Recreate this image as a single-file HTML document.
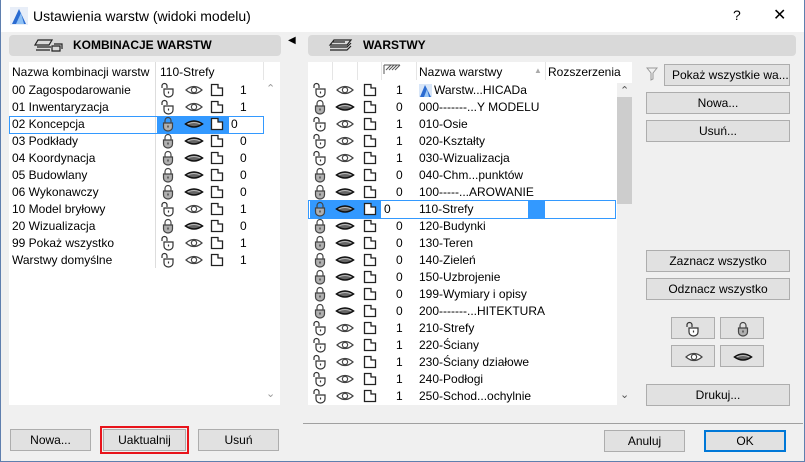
<!DOCTYPE html>
<html><head><meta charset="utf-8">
<style>
*{box-sizing:border-box;margin:0;padding:0}
body{width:805px;height:462px;overflow:hidden;background:#f0f0f0;font-family:"Liberation Sans",sans-serif;font-size:12px;color:#000;position:relative}
.a{position:absolute}
#win{position:absolute;left:0;top:0;width:805px;height:462px;border:1px solid #5f7fae;border-top:none}
#title{position:absolute;left:0;top:0;width:805px;height:32px;background:#fff}
.hdr{position:absolute;background:#d9d9d9;border-radius:4px;height:21px;top:35px;font-weight:bold;font-size:12px;line-height:21px}
.list{position:absolute;background:#fff}
.btn{position:absolute;background:#e1e1e1;border:1px solid #adadad;text-align:center;font-size:12px;line-height:20px;height:22px}
.row{position:absolute;height:17px;line-height:17px;white-space:nowrap}
.sep{position:absolute;width:1px;background:#e5e5e5}
svg.i{position:absolute}
</style></head><body>
<svg width="0" height="0" style="position:absolute">
<defs>
<symbol id="lo" viewBox="0 0 16 16"><path d="M2 6 V4 A2.5 2.5 0 0 1 7 4 V6" fill="none" stroke="#333" stroke-width="1.2"/><path d="M4 7 H13 V11 A4.5 4 0 0 1 4 11 Z" fill="#fff" stroke="#333" stroke-width="1.2"/><path d="M8.5 9.5V11.5" stroke="#333" stroke-width="1.2"/></symbol>
<symbol id="lc" viewBox="0 0 16 16"><path d="M5 7 V4.5 A3 3 0 0 1 11 4.5 V7" fill="none" stroke="#444" stroke-width="1.2"/><path d="M3.5 7 H12.5 V11 A4.5 4 0 0 1 3.5 11 Z" fill="#b0b0b0" stroke="#444" stroke-width="1.2"/><path d="M8 9.5V11.5" stroke="#333" stroke-width="1.2"/></symbol>
<symbol id="eo" viewBox="0 0 20 16"><path d="M2 8 Q10 1 18 8 Q10 15 2 8Z" fill="#fff" stroke="#444" stroke-width="1.2"/><circle cx="10" cy="8" r="2.6" fill="none" stroke="#444" stroke-width="1.2"/></symbol>
<symbol id="ec" viewBox="0 0 20 16"><path d="M1.5 8 Q10 2 18.5 8 Q10 14 1.5 8Z" fill="#666" stroke="#111" stroke-width="1.5"/><path d="M3.5 8 Q10 5 16.5 8" fill="none" stroke="#bbb" stroke-width="1"/></symbol>
<symbol id="dc" viewBox="0 0 16 16"><path d="M2.5 2.5 H9 V6 H13.5 V13.5 H2.5 Z M9 2.5 L9 6" fill="#fff" stroke="#222" stroke-width="1.3"/></symbol>
</defs></svg>

<div id="title">
<svg class="i" style="left:10px;top:7px" width="18" height="18" viewBox="0 0 18 18"><rect x="0" y="0" width="18" height="18" fill="#e8eef8"/><path d="M2 17 L9 2 L16 17 Z" fill="#2a6bd1"/><path d="M6 17 L11 6 L14 17Z" fill="#8fc1f5"/></svg>
<div class="a" style="left:33px;top:8px;font-size:14px">Ustawienia warstw (widoki modelu)</div>
<div class="a" style="left:733px;top:7px;font-size:14px">?</div>
<div class="a" style="left:773px;top:5px;font-size:16px">✕</div>
</div>
<div id="win"></div>

<!-- LEFT -->
<div class="hdr" style="left:9px;width:272px"><svg class="i" style="left:25px;top:3px" width="30" height="15" viewBox="0 0 30 15"><path d="M4 2h14l-3 5H1z M3 9h14 M2 12h14" fill="none" stroke="#222" stroke-width="1.2"/><path d="M18 8h8v5h-8z M20 6h8v5" fill="none" stroke="#222" stroke-width="1.2"/></svg><span class="a" style="left:64px">KOMBINACJE WARSTW</span></div>
<div class="list" style="left:9px;top:62px;width:271px;height:343px"></div>
<div class="sep" style="left:155px;top:62px;height:206px;background:#ddd"></div>
<div class="sep" style="left:263px;top:62px;height:18px"></div>
<div class="a" style="left:12px;top:65px">Nazwa kombinacji warstw</div>
<div class="a" style="left:160px;top:65px">110-Strefy</div>
<div class="a" style="left:266px;top:82px;color:#999;font-size:11px">&#8963;</div>
<div class="a" style="left:266px;top:387px;color:#999;font-size:11px">&#8964;</div>
<div class="a" style="left:9px;top:116px;width:255px;height:18px;border:1px solid #3399ff"></div>
<div class="a" style="left:157px;top:117px;width:72px;height:16px;background:#3399ff"></div>
<div id="L"></div>

<div class="btn" style="left:10px;top:429px;width:81px">Nowa...</div>
<div class="a" style="left:100px;top:426px;width:89px;height:28px;border:2px solid #e8141b"></div>
<div class="btn" style="left:103px;top:429px;width:83px">Uaktualnij</div>
<div class="btn" style="left:198px;top:429px;width:81px">Usuń</div>

<div class="a" style="left:288px;top:35px;font-size:10px">◀</div>

<!-- RIGHT -->
<div class="hdr" style="left:308px;width:488px"><svg class="i" style="left:20px;top:3px" width="26" height="15" viewBox="0 0 26 15"><path d="M6 2h17l-4 5H2z M5 4h12" fill="none" stroke="#222" stroke-width="1.2"/><path d="M2 9h17l4-4 M2 12h17l4-4" fill="none" stroke="#222" stroke-width="1.2"/></svg><span class="a" style="left:55px">WARSTWY</span></div>
<div class="list" style="left:308px;top:62px;width:309px;height:343px"></div>
<div class="a" style="left:617px;top:62px;width:15px;height:21px;background:#fff"></div>
<div class="a" style="left:617px;top:97px;width:15px;height:107px;background:#cdcdcd"></div>
<div class="a" style="left:620px;top:84px;color:#555;font-size:11px">&#8963;</div>
<div class="a" style="left:620px;top:388px;color:#555;font-size:11px">&#8964;</div>
<div class="sep" style="left:332px;top:62px;height:18px"></div>
<div class="sep" style="left:357px;top:62px;height:18px"></div>
<div class="sep" style="left:381px;top:62px;height:18px"></div>
<div class="sep" style="left:416px;top:62px;height:18px"></div>
<div class="sep" style="left:545px;top:62px;height:18px"></div>
<svg class="i" style="left:383px;top:64px" width="18" height="10" viewBox="0 0 18 10"><path d="M1 1h16 M1 1v9 M3 6l5-5 M6 6l5-5 M9 6l5-5 M12 6l5-5" stroke="#555" stroke-width="1" fill="none"/></svg>
<div class="a" style="left:419px;top:65px">Nazwa warstwy</div>
<div class="a" style="left:534px;top:66px;color:#aaa;font-size:8px">▲</div>
<div class="a" style="left:548px;top:65px">Rozszerzenia</div>
<div class="a" style="left:308px;top:200px;width:308px;height:19px;border:1px solid #3399ff"></div>
<div class="a" style="left:310px;top:201px;width:71px;height:17px;background:#3399ff"></div>
<div class="a" style="left:528px;top:201px;width:17px;height:17px;background:#3399ff"></div>
<div id="R"></div>

<svg class="i" style="left:646px;top:67px" width="12" height="14" viewBox="0 0 12 14"><path d="M1 1h10L7 6v6l-2 1V6z" fill="none" stroke="#999"/></svg>
<div class="btn" style="left:664px;top:64px;width:126px;text-align:left;padding-left:7px">Pokaż wszystkie wa... <span style="font-size:8px">▶</span></div>
<div class="btn" style="left:646px;top:92px;width:144px">Nowa...</div>
<div class="btn" style="left:646px;top:120px;width:144px">Usuń...</div>
<div class="btn" style="left:646px;top:250px;width:144px">Zaznacz wszystko</div>
<div class="btn" style="left:646px;top:278px;width:144px">Odznacz wszystko</div>
<div class="btn" style="left:671px;top:317px;width:44px"><svg class="i" style="left:13px;top:3px" width="16" height="16"><use href="#lo"/></svg></div>
<div class="btn" style="left:720px;top:317px;width:44px"><svg class="i" style="left:14px;top:3px" width="16" height="16"><use href="#lc"/></svg></div>
<div class="btn" style="left:671px;top:345px;width:44px"><svg class="i" style="left:12px;top:3px" width="20" height="16"><use href="#eo"/></svg></div>
<div class="btn" style="left:720px;top:345px;width:44px"><svg class="i" style="left:12px;top:3px" width="20" height="16"><use href="#ec"/></svg></div>
<div class="btn" style="left:646px;top:384px;width:144px">Drukuj...</div>
<div class="a" style="left:303px;top:423px;width:500px;height:1px;background:#a0a0a0"></div>
<div class="btn" style="left:604px;top:430px;width:81px">Anuluj</div>
<div class="btn" style="left:704px;top:430px;width:82px;border:2px solid #0078d7;line-height:18px">OK</div>

<script>
var L=[["00 Zagospodarowanie",1],["01 Inwentaryzacja",1],["02 Koncepcja",0,1],["03 Podkłady",0],["04 Koordynacja",0],["05 Budowlany",0],["06 Wykonawczy",0],["10 Model bryłowy",1],["20 Wizualizacja",0],["99 Pokaż wszystko",1],["Warstwy domyślne",1]];
var h="";
L.forEach(function(r,i){var y=82+i*17;var o=r[1];
h+='<div class="row" style="left:12px;top:'+y+'px">'+r[0]+'</div>';
h+='<svg class="i" style="left:160px;top:'+y+'px" width="16" height="16"><use href="#'+(o?'lo':'lc')+'"/></svg>';
h+='<svg class="i" style="left:184px;top:'+y+'px" width="20" height="16"><use href="#'+(o?'eo':'ec')+'"/></svg>';
h+='<svg class="i" style="left:209px;top:'+y+'px" width="16" height="16"><use href="#dc"/></svg>';
h+='<div class="row" style="left:'+(r[2]?231:240)+'px;top:'+y+'px">'+(o?1:0)+'</div>';});
document.getElementById("L").innerHTML=h;
var R=[["Warstw...HICADa",1,"ic"],["000-------...Y MODELU",0],["010-Osie",1],["020-Kształty",1],["030-Wizualizacja",1],["040-Chm...punktów",0],["100-----...AROWANIE",0],["110-Strefy",0,"s"],["120-Budynki",0],["130-Teren",0],["140-Zieleń",0],["150-Uzbrojenie",0],["199-Wymiary i opisy",0],["200-------...HITEKTURA",0],["210-Strefy",1],["220-Ściany",1],["230-Ściany działowe",1],["240-Podłogi",1],["250-Schod...ochylnie",1]];
h="";
R.forEach(function(r,i){var y=82+i*17;var o=r[1];
var nx=419;
if(r[2]=="ic"){h+='<svg class="i" style="left:419px;top:'+(y+2)+'px" width="13" height="13" viewBox="0 0 13 13"><rect width="13" height="13" fill="#d8e6f8"/><path d="M1 13L6 1L12 13Z" fill="#2a6bd1"/><path d="M5 13L8 5L10 13Z" fill="#9cc8f5"/></svg>';nx=434;}
h+='<div class="row" style="left:'+nx+'px;top:'+y+'px">'+r[0]+'</div>';
h+='<svg class="i" style="left:312px;top:'+y+'px" width="16" height="16"><use href="#'+(o?'lo':'lc')+'"/></svg>';
h+='<svg class="i" style="left:335px;top:'+y+'px" width="20" height="16"><use href="#'+(o?'eo':'ec')+'"/></svg>';
h+='<svg class="i" style="left:362px;top:'+y+'px" width="16" height="16"><use href="#dc"/></svg>';
h+='<div class="row" style="left:'+(r[2]=="s"?384:396)+'px;top:'+y+'px">'+(o?1:0)+'</div>';});
document.getElementById("R").innerHTML=h;
</script>
</body></html>
